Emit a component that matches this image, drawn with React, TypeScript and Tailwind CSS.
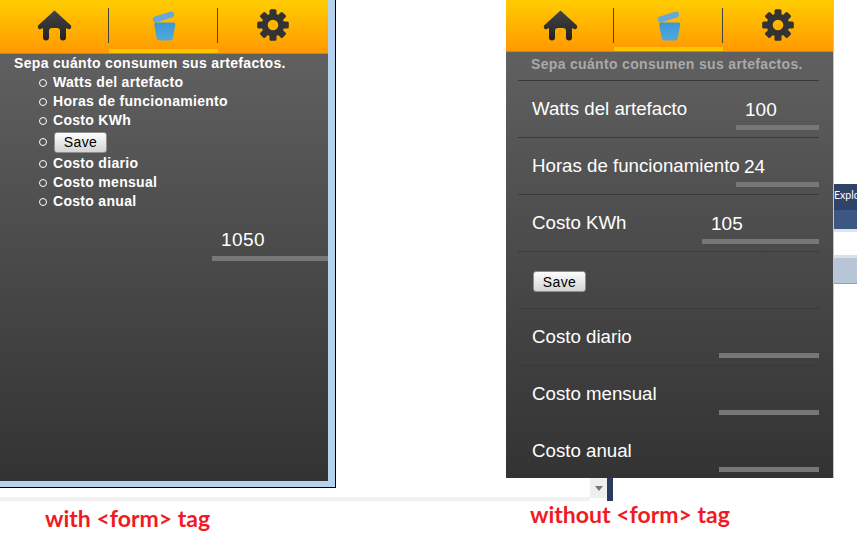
const labels = ['Watts del artefacto', 'Horas de funcionamiento', 'Costo KWh'];
const lowerLabels = ['Costo diario', 'Costo mensual', 'Costo anual'];

function HomeIcon() {
  return (
    <svg width="35" height="31" viewBox="0 0 35 31">
      <defs>
        <linearGradient id="darkIcon" x1="0" y1="0" x2="0" y2="1">
          <stop offset="0" stopColor="#444444" />
          <stop offset="1" stopColor="#222222" />
        </linearGradient>
      </defs>
      <path
        d="M17.5 0.5 L34 15.5 Q34.8 17 33.5 18.8 Q32 20 30 18.6 L29 18 V27.5 Q29 30.5 26 30.5 Q23 30.5 23 27.5 V21 Q23 18 20 18 H15 Q12 18 12 21 V27.5 Q12 30.5 9 30.5 Q6 30.5 6 27.5 V18 L5 18.6 Q3 20 1.5 18.8 Q0.2 17 1 15.5 Z"
        fill="url(#darkIcon)"
      />
    </svg>
  );
}

function BinIcon() {
  return (
    <svg width="24" height="31" viewBox="0 0 24 31">
      <defs>
        <linearGradient id="binBody" x1="0" y1="0" x2="0" y2="1">
          <stop offset="0" stopColor="#3d97d6" />
          <stop offset="1" stopColor="#52a9dc" />
        </linearGradient>
      </defs>
      <rect x="0.5" y="4" width="22" height="6" rx="3" fill="#68a8d8" transform="rotate(-17 11.5 7)" />
      <path d="M3.5 12.5 H21.5 Q23.5 12.5 23.3 14.5 L21 27.5 Q20.5 30.5 17.5 30.5 H8 Q5 30.5 4.5 27.5 L2.2 14.5 Q2 12.5 3.5 12.5 Z" fill="url(#binBody)" />
    </svg>
  );
}

function GearIcon() {
  const angles = [0, 45, 90, 135, 180, 225, 270, 315];
  return (
    <svg width="32" height="32" viewBox="0 0 32 32">
      {angles.map((a) => (
        <rect key={a} x="12.5" y="0.2" width="7" height="8" rx="1.5" fill="#333333" transform={`rotate(${a} 16 16)`} />
      ))}
      <circle cx="16" cy="16" r="8.3" fill="none" stroke="#333333" strokeWidth="6" />
    </svg>
  );
}

function TabBar({ height, firstCol }: { height: string; firstCol: string }) {
  return (
    <div className={`${height} flex shrink-0 bg-gradient-to-b from-[#ffcc00] to-[#ff9900] border-b border-[#b98a3a]`}>
      <div className={`${firstCol} flex justify-center pt-[10px]`}>
        <HomeIcon />
      </div>
      <div className="w-[109px] h-full border-b-[4px] border-[#ffc600] flex justify-center pt-[10px] relative">
        <div className="absolute left-0 top-[8px] h-[35px] w-px -ml-px bg-[#444444]" />
        <div className="absolute right-0 top-[8px] h-[35px] w-px bg-[#444444]" />
        <BinIcon />
      </div>
      <div className="flex-1 flex justify-center pt-[9px]">
        <GearIcon />
      </div>
    </div>
  );
}

function Bar({ width }: { width: string }) {
  return <div className={`${width} h-[5px] bg-[#777777] ml-auto`} />;
}

function SaveButton() {
  return (
    <button className="w-[53px] h-[21px] rounded-[3px] border border-[#8f8f8f] bg-gradient-to-b from-[#fdfdfd] to-[#d4d4d4] text-[14px] leading-none font-normal text-black tracking-[0.4px]">
      Save
    </button>
  );
}

function Row({ label, value, valueClass, barWidth }: { label: string; value?: string; valueClass?: string; barWidth: string }) {
  return (
    <div className="h-[57px] border-b border-[#3a3a3a] relative">
      <span className="absolute left-[14px] top-[17px] text-[18.7px] leading-[22px] text-white whitespace-nowrap">{label}</span>
      {value && <span className={`absolute top-[18px] text-[19px] leading-[22px] text-white ${valueClass}`}>{value}</span>}
      <div className="absolute right-0 top-[44px] w-full">
        <Bar width={barWidth} />
      </div>
    </div>
  );
}

function FormWindow() {
  return (
    <div className="absolute left-0 top-0 w-[336px] h-[488px] bg-[#b5d3ee] border-r border-b border-black pr-[7px] pb-[6px] flex flex-col">
      <TabBar height="h-[54px]" firstCol="w-[109px]" />
      <div className="flex-1 bg-gradient-to-b from-[#606060] to-[#333333] relative">
        <p className="ml-[14px] mt-[1px] text-[14px] leading-[17px] font-bold text-white tracking-[0.33px] whitespace-nowrap">
          Sepa cuánto consumen sus artefactos.
        </p>
        <ul className="mt-[1px] ml-[39px] flex flex-col text-[14px] font-bold text-white tracking-[0.3px]">
          {labels.map((l) => (
            <li key={l} className="h-[19px] flex items-center gap-[6px] whitespace-nowrap">
              <span className="w-[8px] h-[8px] rounded-full border border-white" />
              {l}
            </li>
          ))}
          <li className="h-[24px] flex items-center gap-[7px]">
            <span className="w-[8px] h-[8px] rounded-full border border-white" />
            <SaveButton />
          </li>
          {lowerLabels.map((l) => (
            <li key={l} className="h-[19px] flex items-center gap-[6px] whitespace-nowrap">
              <span className="w-[8px] h-[8px] rounded-full border border-white" />
              {l}
            </li>
          ))}
        </ul>
        <div className="absolute left-[221px] top-[175px] text-[19px] leading-[22px] tracking-[0.4px] text-white">1050</div>
        <div className="absolute left-[212px] right-0 top-[202px] h-[5px] bg-[#777777]" />
      </div>
    </div>
  );
}

function PlainWindow() {
  return (
    <div className="absolute left-[506px] top-0 w-[328px] h-[478px] flex flex-col border-r border-[#b8c8dc]">
      <TabBar height="h-[52px]" firstCol="w-[108px]" />
      <div className="flex-1 bg-gradient-to-b from-[#606060] to-[#333333] pl-[12px] pr-[14px] overflow-hidden">
        <div className="h-[29px] border-b border-[#3a3a3a] pl-[13px] pt-[4px] text-[14px] leading-[17px] font-bold text-[#a9a9a9] tracking-[0.33px] whitespace-nowrap">
          Sepa cuánto consumen sus artefactos.
        </div>
        <Row label={labels[0]} value="100" valueClass="left-[227px]" barWidth="w-[83px]" />
        <Row label={labels[1]} value="24" valueClass="left-[226px]" barWidth="w-[83px]" />
        <Row label={labels[2]} value="105" valueClass="left-[193px]" barWidth="w-[117px]" />
        <div className="h-[57px] border-b border-[#3a3a3a] flex items-center pl-[15px] pt-[3px]">
          <SaveButton />
        </div>
        {lowerLabels.map((l) => (
          <Row key={l} label={l} barWidth="w-[100px]" />
        ))}
      </div>
    </div>
  );
}

function BackgroundPage() {
  return (
    <>
      {/* bits of the window behind */}
      <div className="absolute left-0 top-[497px] w-[590px] h-[4px] bg-[#f1f1f1]" />
      <div className="absolute left-[590px] top-[478px] w-[17px] h-[20px] bg-[#efefef] flex items-center justify-center">
        <div className="w-0 h-0 border-x-[4px] border-x-transparent border-t-[5px] border-t-[#777777]" />
      </div>
      <div className="absolute left-[607px] top-[478px] w-[6px] h-[23px] bg-[#2a3b5c]" />
      <div className="absolute left-[834px] top-[184px] w-[23px] flex flex-col">
        <div className="h-[26px] bg-[#2f4268] text-[10.5px] leading-[22px] text-white whitespace-nowrap font-['Lato',sans-serif]">
          Explo
        </div>
        <div className="h-[19px] bg-[#3e5682]" />
        <div className="h-[3px] bg-[#dfe3ea]" />
        <div className="h-[23px] bg-white" />
        <div className="h-[3px] bg-[#dddfe3]" />
        <div className="h-[26px] bg-[#b9c6d8] border-b border-[#9a9fa8]" />
      </div>
    </>
  );
}

export default function App() {
  return (
    <div className="relative w-[857px] h-[547px] bg-white overflow-hidden font-['Liberation_Sans',Arial,sans-serif]">
      <BackgroundPage />
      <FormWindow />
      <PlainWindow />
      <div className="absolute left-[45px] top-[505px] text-[23px] leading-[26px] font-bold text-[#f01a24] whitespace-nowrap font-['Lato',sans-serif]">
        with &lt;form&gt; tag
      </div>
      <div className="absolute left-[530px] top-[501px] text-[23px] leading-[26px] font-bold text-[#f01a24] whitespace-nowrap font-['Lato',sans-serif]">
        without &lt;form&gt; tag
      </div>
    </div>
  );
}
